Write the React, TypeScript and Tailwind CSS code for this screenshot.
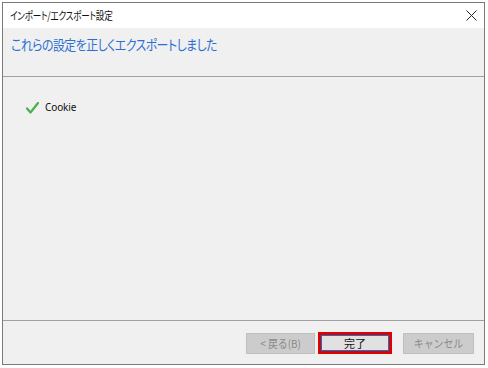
const JP = { fontFamily: '"Noto Sans CJK JP", "Noto Sans", sans-serif' }

function CheckIcon() {
  return (
    <svg width="13" height="12" viewBox="0 0 13 12" className="shrink-0">
      <path d="M1 6.5 L4.5 10.5 L12 1" fill="none" stroke="#4cae4c" strokeWidth="2.2" strokeLinecap="round" strokeLinejoin="round" />
    </svg>
  )
}

function Button({ label, disabled, primary, w }: { label: string; disabled?: boolean; primary?: boolean; w: string }) {
  if (primary) {
    return (
      <div className={`${w} h-[22px] border-[3px] border-[#e00000] flex`}>
        <div className="flex-1 border border-[#0078d7] bg-[#e1e1e1] flex items-center justify-center text-[11px] text-[#111]">
          {label}
        </div>
      </div>
    )
  }
  return (
    <div
      className={`${w} h-[21px] border flex items-center justify-center text-[11px] ${
        disabled ? 'bg-[#cccccc] border-[#bfbfbf] text-[#8a8a8a]' : 'bg-[#e1e1e1] border-[#adadad] text-[#111]'
      }`}
    >
      <span className="scale-x-[0.9] whitespace-pre">{label}</span>
    </div>
  )
}

export default function App() {
  return (
    <div className="w-[488px] h-[368px] bg-white overflow-hidden pt-[2px] pl-[2px]" style={JP}>
      <div className="w-[483px] h-[363px] border border-[#7a7a7a] flex flex-col bg-[#f0f0f0]">
        {/* Title bar */}
        <div className="h-[25px] bg-white flex items-center justify-between pl-[7px] pr-[6px]">
          <span className="text-[11px] text-[#111] [font-feature-settings:'palt'] tracking-[-0.3px] scale-x-[0.78] origin-left whitespace-nowrap">
            インポート/エクスポート設定
          </span>
          <svg width="11" height="11" viewBox="0 0 11 11" className="mr-[1px]">
            <path d="M0.5 0.5 L10.5 10.5 M10.5 0.5 L0.5 10.5" stroke="#222" strokeWidth="1" />
          </svg>
        </div>

        {/* Header */}
        <div className="h-[49px] border-b border-[#a0a0a0] pl-[8px] pt-[7px]">
          <h1 className="text-[14px] leading-[18px] text-[#2d6fd2] [font-feature-settings:'palt'] tracking-[-0.6px] scale-x-[0.85] origin-left whitespace-nowrap">
            これらの設定を正しくエクスポートしました
          </h1>
        </div>

        {/* Body */}
        <div className="flex-1 border-b border-[#a0a0a0] pl-[23px] pt-[23px]">
          <div className="flex items-center gap-[6px]">
            <CheckIcon />
            <span className="text-[10px] tracking-[-0.1px] text-[#111]" style={{ fontFamily: '"Noto Sans", "Open Sans", sans-serif' }}>Cookie</span>
          </div>
        </div>

        {/* Footer */}
        <div className="h-[43px] flex items-start pt-[12px] pl-[243px]">
          <Button label="< 戻る(B)" disabled w="w-[69px]" />
          <div className="w-[3px]" />
          <div className="-mt-[1px]">
            <Button label="完了" primary w="w-[74px]" />
          </div>
          <div className="w-[11px]" />
          <Button label="キャンセル" disabled w="w-[71px]" />
        </div>
      </div>
    </div>
  )
}
